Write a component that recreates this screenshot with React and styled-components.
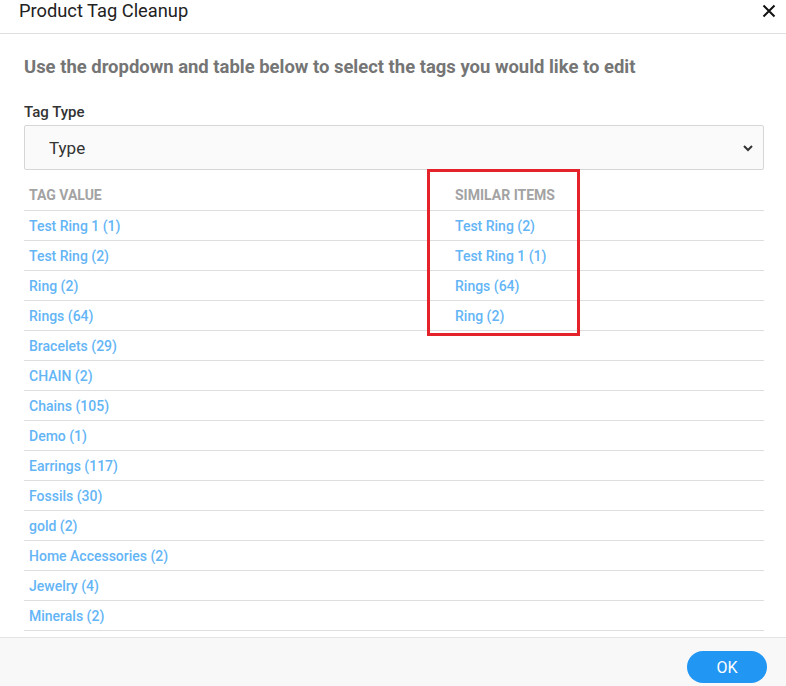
import React from "react";
import styled, { createGlobalStyle } from "styled-components";

const Global = createGlobalStyle`
  html, body { margin: 0; padding: 0; background: #fff; }
  body { font-family: Roboto, "Noto Sans", sans-serif; }
  * { box-sizing: border-box; }
`;

const Dialog = styled.div`
  width: 786px;
  height: 686px;
  display: flex;
  flex-direction: column;
  overflow: hidden;
  background: #fff;
`;

const Header = styled.div`
  height: 34px;
  flex: none;
  display: flex;
  align-items: center;
  justify-content: space-between;
  padding: 0 9px 12px 19px;
  border-bottom: 1px solid #e0e0e0;
`;

const Title = styled.h2`
  margin: 0;
  font-size: 18.3px;
  font-weight: 400;
  color: #212121;
  line-height: 20px;
`;

const Close = styled.button`
  border: none;
  background: none;
  padding: 0;
  width: 16px;
  height: 16px;
  display: flex;
  align-items: center;
  justify-content: center;
  cursor: pointer;
`;

const Body = styled.div`
  flex: 1;
  overflow: hidden;
  padding: 0 22px 0 24px;
`;

const Intro = styled.p`
  margin: 23px 0 0;
  font-size: 18.45px;
  font-weight: 700;
  color: #757575;
  line-height: 20px;
`;

const Label = styled.div`
  margin-top: 27px;
  font-size: 15px;
  font-weight: 500;
  color: #333;
  line-height: 17px;
`;

const SelectBox = styled.div`
  margin-top: 4px;
  height: 45px;
  border: 1px solid #d6d6d6;
  border-radius: 2px;
  background: #fafafa;
  display: flex;
  align-items: center;
  justify-content: space-between;
  padding: 0 9px 0 24px;
  font-size: 17px;
  color: #333;
`;

const TableWrap = styled.div`
  position: relative;
`;

const Row = styled.div`
  display: grid;
  grid-template-columns: 426px 1fr;
  height: ${(p) => (p.$head ? "41px" : "30px")};
  align-items: center;
  border-bottom: 1px solid #dedede;
  padding-top: ${(p) => (p.$head ? "9px" : "0")};
`;

const HeadCell = styled.div`
  padding-left: 5px;
  font-size: 14px;
  font-weight: 700;
  color: #a3a3a3;
  text-transform: uppercase;
`;

const Cell = styled.a`
  padding-left: 5px;
  font-size: 14px;
  font-weight: 500;
  color: #64b5f6;
  text-decoration: none;
  justify-self: start;
  cursor: pointer;
`;

const Highlight = styled.div`
  position: absolute;
  left: 403px;
  top: -1px;
  width: 153px;
  height: 167px;
  border: 3px solid #e4222a;
  pointer-events: none;
`;

const Footer = styled.div`
  height: 49px;
  flex: none;
  border-top: 1px solid #e4e4e4;
  background: #f8f8f8;
  display: flex;
  justify-content: flex-end;
  align-items: flex-start;
  padding: 13px 19px 0 0;
`;

const OkButton = styled.button`
  width: 80px;
  height: 32px;
  border: none;
  border-radius: 16px;
  background: #2196f3;
  color: #fff;
  font-family: Roboto, sans-serif;
  font-size: 16px;
  cursor: pointer;
`;

const tags = [
  "Test Ring 1 (1)",
  "Test Ring (2)",
  "Ring (2)",
  "Rings (64)",
  "Bracelets (29)",
  "CHAIN (2)",
  "Chains (105)",
  "Demo (1)",
  "Earrings (117)",
  "Fossils (30)",
  "gold (2)",
  "Home Accessories (2)",
  "Jewelry (4)",
  "Minerals (2)",
];

const similar = ["Test Ring (2)", "Test Ring 1 (1)", "Rings (64)", "Ring (2)"];

export default function App() {
  return (
    <>
      <Global />
      <Dialog>
        <Header>
          <Title>Product Tag Cleanup</Title>
          <Close aria-label="Close">
            <svg width="14" height="14" viewBox="0 0 14 14">
              <path d="M1.5 1.5 L12.5 12.5 M12.5 1.5 L1.5 12.5" stroke="#111" strokeWidth="2" fill="none" />
            </svg>
          </Close>
        </Header>
        <Body>
          <Intro>Use the dropdown and table below to select the tags you would like to edit</Intro>
          <Label>Tag Type</Label>
          <SelectBox>
            <span>Type</span>
            <svg width="12" height="8" viewBox="0 0 12 8">
              <path d="M2 2 L6 6 L10 2" stroke="#333" strokeWidth="2" fill="none" />
            </svg>
          </SelectBox>
          <TableWrap>
            <Row $head>
              <HeadCell>Tag Value</HeadCell>
              <HeadCell>Similar Items</HeadCell>
            </Row>
            {tags.map((t, i) => (
              <Row key={t}>
                <Cell>{t}</Cell>
                {similar[i] ? <Cell>{similar[i]}</Cell> : <span />}
              </Row>
            ))}
            <Highlight />
          </TableWrap>
        </Body>
        <Footer>
          <OkButton>OK</OkButton>
        </Footer>
      </Dialog>
    </>
  );
}
